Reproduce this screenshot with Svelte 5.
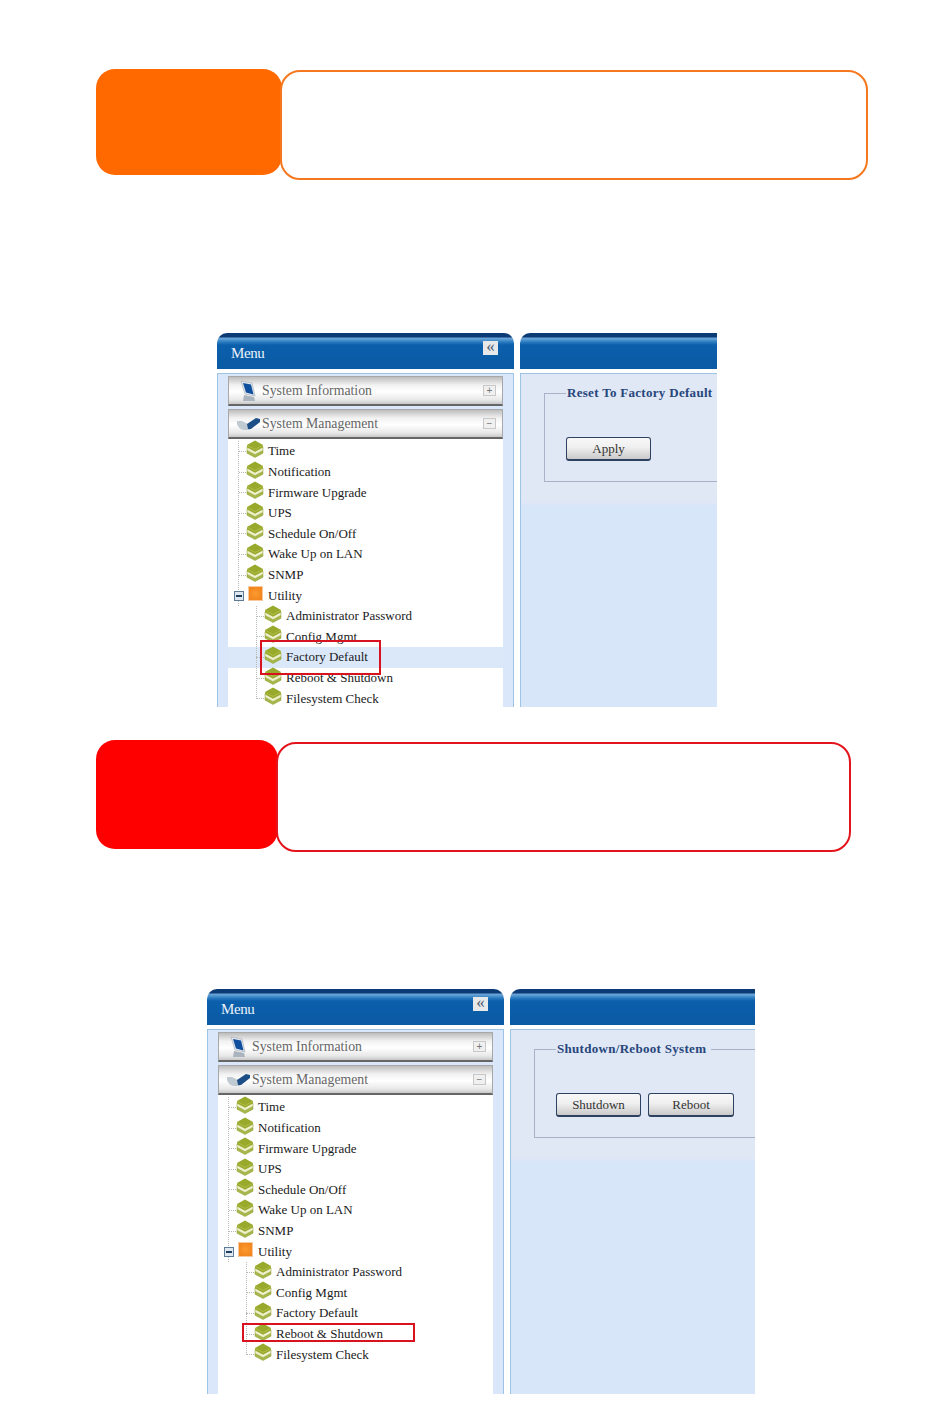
<script lang="ts">
    const topItems = ["Time", "Notification", "Firmware Upgrade", "UPS", "Schedule On/Off", "Wake Up on LAN", "SNMP"];
    const utilityItems = ["Administrator Password", "Config Mgmt", "Factory Default", "Reboot & Shutdown", "Filesystem Check"];
</script>

{#snippet stack()}
    <svg class="stack" viewBox="0 0 18 18" aria-hidden="true">
        <path d="M1 10.500 9 14.800l8-4.300v2.700l-8 4.300-8-4.300z" fill="#a8b84a" stroke="#8d9e30" stroke-width=".5" />
        <path d="M1 7 9 11.300 17 7v3.300l-8 4.300-8-4.300z" fill="#eef1cc" stroke="#9aaa3c" stroke-width=".6" />
        <path d="M9 .6 17 5v2.200l-8 4.300-8-4.300V5z" fill="#98a92c" />
        <path d="M1 5.200 9 9.500l8-4.300" fill="none" stroke="#b7c558" stroke-width=".7" />
    </svg>
{/snippet}

{#snippet shot(variant: string, legend: string, buttons: string[], selected: string)}
    <div class="shot {variant}">
        <div class="panel side">
            <div class="head">
                <span class="head-title">Menu</span>
                <span class="collapse">«</span>
            </div>
            <div class="body menu">
                <div class="accordion">
                    <svg class="acc-icon" viewBox="0 0 18 22" aria-hidden="true">
                        <path d="M2 1l11 2 3 13-10-2z" fill="#e4e8ee" stroke="#a8b2bc" stroke-width=".7" />
                        <path d="M4 3l8 1.500 2.500 10-7.500-2z" fill="#0e4f9e" />
                        <path d="M5 15l10 2 1 4H4z" fill="#aab4be" />
                    </svg>
                    <span>System Information</span>
                    <span class="sign">+</span>
                </div>
                <div class="accordion open">
                    <svg class="acc-icon" viewBox="0 0 26 18" aria-hidden="true">
                        <path d="M1 6h5l8 4v5H8C5 15 2 12 1 9z" fill="#c0cad3" />
                        <path d="M11 9l9-6 4 1v3l-9 7h-3z" fill="#1c4f86" />
                    </svg>
                    <span>System Management</span>
                    <span class="sign">−</span>
                </div>
                <div class="tree">
                    <ul class="branch">
                        {#each topItems as item (item)}
                            <li class="row">
                                <span class="tick"></span>
                                {@render stack()}
                                <span>{item}</span>
                            </li>
                        {/each}
                        <li class="row utility">
                            <span class="minus"></span>
                            <span class="folder"></span>
                            <span>Utility</span>
                        </li>
                    </ul>
                    <ul class="branch nested">
                        {#each utilityItems as item (item)}
                            <li class="row" class:selected={item === selected}>
                                <span class="tick"></span>
                                {@render stack()}
                                <span>{item}</span>
                            </li>
                        {/each}
                    </ul>
                </div>
            </div>
        </div>
        <div class="panel main">
            <div class="head"></div>
            <div class="body content">
                <fieldset>
                    <legend>{legend}</legend>
                    <div class="buttons">
                        {#each buttons as label (label)}
                            <button class:wide={label === "Reboot"}>{label}</button>
                        {/each}
                    </div>
                </fieldset>
            </div>
        </div>
        <span class="mark"></span>
    </div>
{/snippet}

<div class="page">
    <div class="callout orange">
        <div class="tag"></div>
        <div class="box"></div>
    </div>

    {@render shot("first", "Reset To Factory Default", ["Apply"], "Factory Default")}

    <div class="callout red">
        <div class="tag"></div>
        <div class="box"></div>
    </div>

    {@render shot("second", "Shutdown/Reboot System", ["Shutdown", "Reboot"], "")}
</div>

<style>
    :global(body) {
        margin: 0;
        background: #fff;
    }

    .page {
        height: 1420px;
        padding-top: 69px;
        box-sizing: border-box;
        font-family: "Liberation Serif", serif;
        overflow: hidden;
    }

    .callout {
        display: flex;
        align-items: flex-start;
        margin-left: 96px;
        height: 111px;
    }

    .tag {
        flex: none;
        border-radius: 19px;
    }

    .box {
        flex: none;
        box-sizing: border-box;
        margin-top: 1px;
        margin-left: -2px;
        height: 110px;
        background: #fff;
        border-radius: 20px;
    }

    .orange .tag {
        width: 186px;
        height: 106px;
        background: #ff6900;
    }

    .orange .box {
        width: 588px;
        border: 2px solid #f5781e;
    }

    .red {
        margin-top: 33px;
    }

    .red .tag {
        width: 182px;
        height: 109px;
        background: #ff0000;
    }

    .red .box {
        width: 575px;
        margin-top: 2px;
        margin-left: -2px;
        border: 2px solid #e4141c;
    }

    .shot {
        position: relative;
        display: flex;
        gap: 6px;
        overflow: hidden;
    }

    .first {
        width: 500px;
        height: 374px;
        margin: 153px 0 0 217px;
    }

    .second {
        width: 548px;
        height: 405px;
        margin: 138px 0 0 207px;
    }

    .panel {
        display: flex;
        flex-direction: column;
    }

    .side {
        flex: none;
        width: 297px;
    }

    .main {
        flex: 1;
    }

    .head {
        flex: none;
        display: flex;
        align-items: center;
        justify-content: space-between;
        box-sizing: border-box;
        height: 36px;
        padding: 4px 16px 0 14px;
        border-radius: 10px 10px 0 0;
        background: linear-gradient(#0c3a74 0 4px, #6ba4d8 5px, #62a0d6 6px, #2a7cc0 9px, #0b5fab 12px, #0a5aa4 100%);
    }

    .main .head {
        border-radius: 10px 0 0 0;
    }

    .head-title {
        color: #eaf2fb;
        font-size: 15px;
        letter-spacing: -0.4px;
    }

    .collapse {
        display: block;
        width: 15px;
        height: 14px;
        margin-top: -10px;
        background: #e6e8ea;
        color: #4a5c70;
        font-size: 17px;
        line-height: 11px;
        text-align: center;
    }

    .body {
        flex: 1;
        box-sizing: border-box;
        margin-top: 4px;
        border: 1px solid #9cc4e4;
        border-width: 1px 0 0 1px;
        background: #dae7fa;
    }

    .menu {
        padding: 2px 10px 0;
        border-right: 1px solid #9cc4e4;
    }

    .accordion {
        display: flex;
        align-items: center;
        box-sizing: border-box;
        height: 30px;
        margin-bottom: 3px;
        padding: 0 6px 0 33px;
        position: relative;
        border: 1px solid #a8a8a8;
        border-bottom: 2px solid #666;
        background: linear-gradient(#bdbdbd, #f2f2f2 30%, #fff 55%, #e8e8e8 85%, #c8c8c8);
        color: #666;
        font-size: 13.8px;
    }

    .accordion.open {
        margin-bottom: 0;
    }

    .acc-icon {
        position: absolute;
        left: 10px;
        top: 3px;
        width: 18px;
        height: 22px;
    }

    .open .acc-icon {
        left: 7px;
        top: 5px;
        width: 26px;
        height: 18px;
    }

    .sign {
        box-sizing: border-box;
        width: 13px;
        height: 11px;
        margin-left: auto;
        border: 1px solid #c8c8c8;
        background: #f0f0f0;
        color: #777;
        font-family: "Liberation Sans", sans-serif;
        font-size: 10px;
        line-height: 9px;
        text-align: center;
    }

    .tree {
        height: 100%;
        padding-top: 2.2px;
        background: #fff;
    }

    ul {
        list-style: none;
        margin: 0;
        padding: 0;
    }

    .branch {
        margin-left: 10px;
        border-left: 1px dotted #b4bab4;
    }

    .nested {
        position: relative;
        margin-left: 0;
        padding-left: 28px;
        border-left: 0;
    }

    .nested::before {
        content: "";
        position: absolute;
        left: 28px;
        top: 0;
        bottom: 10px;
        border-left: 1px dotted #b4bab4;
    }

    .row {
        display: flex;
        align-items: center;
        height: 20.6px;
        color: #1a1a1a;
        font-size: 13px;
        white-space: nowrap;
    }

    .tick {
        flex: none;
        width: 7px;
        border-top: 1px dotted #b4bab4;
    }

    .nested .tick {
        width: 8px;
    }

    .stack {
        flex: none;
        width: 18px;
        height: 18px;
        margin: -5px 4px 0 0;
    }

    .selected {
        margin-left: -28px;
        padding-left: 28px;
        background: #dbe8fa;
    }

    .utility {
        margin-left: -5px;
    }

    .minus {
        flex: none;
        box-sizing: border-box;
        width: 10px;
        height: 10px;
        margin: 1px 4px 0 0;
        border: 1px solid #5d7a96;
        background: linear-gradient(#1f3f5f, #1f3f5f) center / 6px 2px no-repeat, #dfe8f0;
    }

    .folder {
        flex: none;
        width: 15px;
        height: 15px;
        margin: -4px 5px 0 0;
        border: 1px solid #f6c9a0;
        box-sizing: border-box;
        background: radial-gradient(#fb9a30, #f0801a);
    }

    .content {
        padding: 11px 0 0 23px;
        background: linear-gradient(#e0e7f5 0 128px, #d8e6fa 132px);
    }

    fieldset {
        box-sizing: border-box;
        width: 100%;
        height: 97px;
        margin: 0;
        padding: 0 0 0 21px;
        border: 1px solid #a9b3c8;
        border-right: 0;
    }

    legend {
        padding: 0 5px 0 1px;
        color: #27467c;
        font-size: 13px;
        font-weight: bold;
        letter-spacing: 0.3px;
        white-space: nowrap;
    }

    .buttons {
        display: flex;
        gap: 7px;
        padding-top: 36px;
    }

    button {
        box-sizing: border-box;
        width: 85px;
        height: 24px;
        padding: 0;
        border: 1px solid #2c4260;
        border-bottom-width: 2px;
        border-radius: 3px;
        background: linear-gradient(#f8f8f8, #efefef 45%, #c9c9c9);
        color: #333;
        font-family: "Liberation Serif", serif;
        font-size: 13px;
    }

    button.wide {
        width: 86px;
    }

    .mark {
        position: absolute;
        box-sizing: border-box;
        border: 2px solid #d9121f;
    }

    .first .mark {
        left: 43px;
        top: 307px;
        width: 121px;
        height: 35px;
    }

    .second .mark {
        left: 35px;
        top: 334px;
        width: 173px;
        height: 19px;
    }
</style>
